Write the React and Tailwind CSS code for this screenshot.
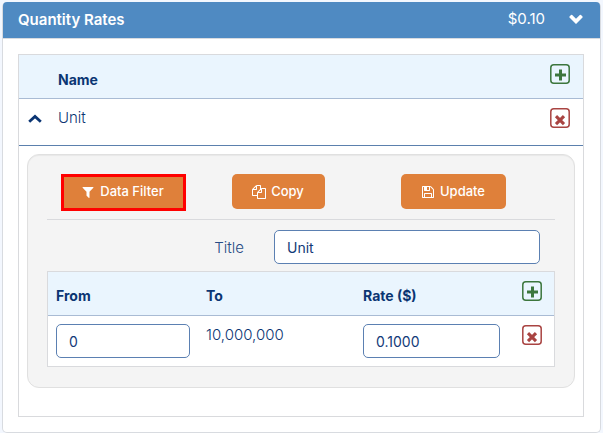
const FilterIcon = () => (
  <svg viewBox="0 0 1792 1792" className="size-3.5 fill-current" aria-hidden="true">
    <path d="M1595 295q17 41-14 70l-493 493v742q0 42-39 59-13 5-25 5-27 0-45-19l-256-256q-19-19-19-45v-486l-493-493q-31-29-14-70 17-39 59-39h1280q42 0 59 39z" />
  </svg>
);

const CopyIcon = () => (
  <svg viewBox="0 0 1792 1792" className="size-3.5 fill-current" aria-hidden="true">
    <path d="M1696 384q40 0 68 28t28 68v1216q0 40-28 68t-68 28h-960q-40 0-68-28t-28-68v-288h-544q-40 0-68-28t-28-68v-672q0-40 20-88t48-76l408-408q28-28 76-48t88-20h416q40 0 68 28t28 68v328q68-40 128-40h416zm-544 213l-299 299h299v-299zm-640-384l-299 299h299v-299zm196 647l316-316v-416h-384v416q0 40-28 68t-68 28h-416v640h512v-256q0-40 20-88t48-76zm956 804v-1152h-384v416q0 40-28 68t-68 28h-416v640h896z" />
  </svg>
);

const SaveIcon = () => (
  <svg viewBox="0 0 1792 1792" className="size-3.5 fill-current" aria-hidden="true">
    <path d="M512 1536h768v-384h-768v384zm896 0h128v-896q0-14-10-38.5t-20-34.5l-281-281q-10-10-34-20t-39-10v416q0 40-28 68t-68 28h-576q-40 0-68-28t-28-68v-416h-128v1280h128v-416q0-40 28-68t68-28h832q40 0 68 28t28 68v416zm-384-928v-320q0-13-9.5-22.5t-22.5-9.5h-192q-13 0-22.5 9.5t-9.5 22.5v320q0 13 9.5 22.5t22.5 9.5h192q13 0 22.5-9.5t9.5-22.5zm640 32v928q0 40-28 68t-68 28h-1344q-40 0-68-28t-28-68v-1344q0-40 28-68t68-28h928q40 0 88 20t76 48l280 280q28 28 48 76t20 88z" />
  </svg>
);

const ChevronDown = () => (
  <svg viewBox="0 0 14 10" className="block h-2.5 w-3.5 fill-current" aria-hidden="true">
    <path d="M7 9.9 0.5 3.6Q0 3 0.5 2.4L2 0.9Q2.6 0.4 3.2 0.9L7 4.7 10.8 0.9Q11.4 0.4 12 0.9L13.5 2.4Q14 3 13.5 3.6Z" />
  </svg>
);

const ChevronUp = () => (
  <svg viewBox="0 0 14 9" className="block h-[9px] w-3.5" fill="none" stroke="currentColor" strokeWidth="2.8" aria-hidden="true">
    <path d="M1.2 7.7 7 2.4 12.8 7.7" />
  </svg>
);

function AddButton({ label }) {
  return (
    <button type="button" aria-label={label} className="block text-[#3c763d]">
      <svg viewBox="0 0 20 20" className="block size-5" fill="none" stroke="currentColor" aria-hidden="true">
        <rect x="0.8" y="0.8" width="18.4" height="18.4" rx="3" strokeWidth="1.5" />
        <path d="M10.5 5.5v11M5 11h11" strokeWidth="3" />
      </svg>
    </button>
  );
}

function RemoveButton({ label }) {
  return (
    <button type="button" aria-label={label} className="block text-[#a94442]">
      <svg viewBox="0 0 20 20" className="block size-5" fill="none" stroke="currentColor" aria-hidden="true">
        <rect x="0.8" y="0.8" width="18.4" height="18.4" rx="3" strokeWidth="1.5" />
        <path d="M6 8.2l8 8M14 8.2l-8 8" strokeWidth="3.1" />
      </svg>
    </button>
  );
}

function ActionButton({ icon, children, highlighted }) {
  return (
    <button
      type="button"
      className={
        "flex items-center gap-[5px] bg-[#df803a] text-[13px] font-medium text-white " +
        (highlighted ? "h-[37px] border-[3px] border-[#ff0000] pr-[19px] pl-[17px] pb-0.5" : "h-[35px] rounded-[5px] pr-[21px] pl-5")
      }
    >
      {icon}
      {children}
    </button>
  );
}

const inputClass =
  "block h-[34px] w-full rounded-[5px] border border-[#5b80b2] bg-white px-3 text-sm font-normal text-[#123a78]";

export default function App() {
  return (
    <div className="min-h-screen bg-[#f3f7fe] px-0.5 pt-0.5 pb-px font-['Inter','Liberation_Sans',sans-serif] text-[#0b3573]">
      <section className="rounded-[5px] border border-t-0 border-[#d8dbe0] bg-white">
        <header className="flex h-[37px] items-center rounded-t-[4px] border-b border-[#d8dbe0] bg-[#4f8ac2] pr-[17px] pl-[15px] text-[15px] text-white">
          <h2 className="grow font-semibold">Quantity Rates</h2>
          <span className="mr-6 pb-0.5 text-[15px]">$0.10</span>
          <button type="button" aria-label="Collapse quantity rates" className="pb-0.5">
            <ChevronDown />
          </button>
        </header>

        <div className="p-[15px] pr-4">
          <table className="w-full table-fixed border-separate border-spacing-0 border border-[#d9dadd] text-left text-[15px]">
            <colgroup>
              <col className="w-[39px]" />
              <col />
              <col className="w-[33px]" />
            </colgroup>
            <thead>
              <tr className="h-11 bg-[#eaf5fe] text-sm">
                <th className="border-b border-[#a9bbd4]" />
                <th className="border-b border-[#a9bbd4] pt-1.5 font-bold">Name</th>
                <th className="border-b border-[#a9bbd4] pt-[9px] align-top">
                  <AddButton label="Add rate table" />
                </th>
              </tr>
            </thead>
            <tbody>
              <tr className="h-[47px] align-top">
                <td className="border-b border-[#5b80ad] pt-[15px] pl-[9px]">
                  <button type="button" aria-label="Collapse Unit" className="block">
                    <ChevronUp />
                  </button>
                </td>
                <td className="border-b border-[#5b80ad] pt-2 font-light">Unit</td>
                <td className="border-b border-[#5b80ad] pt-[9px]">
                  <RemoveButton label="Remove Unit" />
                </td>
              </tr>
              <tr>
                <td colSpan={3} className="px-2 pt-2 pb-7">
                  <div className="rounded-xl border border-[#e0e0e0] bg-[#f4f4f4] px-[19px] pt-[19px] pb-5 shadow-[inset_0_1px_1px_rgba(0,0,0,0.05)]">
                    <div className="grid grid-cols-[153fr_157fr_193fr] items-start justify-items-center border-b border-[#d9dadd] pr-[5px] pb-2">
                      <ActionButton icon={<FilterIcon />} highlighted>Data Filter</ActionButton>
                      <ActionButton icon={<CopyIcon />}>Copy</ActionButton>
                      <ActionButton icon={<SaveIcon />}>Update</ActionButton>
                    </div>

                    <div className="grid grid-cols-[227fr_281fr] items-center pt-2.5 pb-[7px]">
                      <label htmlFor="rate-title" className="pt-0.5 pr-[30px] text-right font-light text-[#274c85]">Title</label>
                      <div className="pr-[15px]">
                        <input id="rate-title" className={inputClass} defaultValue="Unit" />
                      </div>
                    </div>

                    <table className="w-full table-fixed border-separate border-spacing-0 border border-[#d9dadd] bg-white">
                      <colgroup>
                        <col className="w-[150px]" />
                        <col className="w-[157px]" />
                        <col className="w-[167px]" />
                        <col className="w-[32px]" />
                      </colgroup>
                      <thead>
                        <tr className="h-11 bg-[#eaf5fe] text-sm">
                          <th className="border-b border-[#a9bbd4] pt-1 pl-2 font-bold">From</th>
                          <th className="border-b border-[#a9bbd4] pt-1 pl-2 font-bold">To</th>
                          <th className="border-b border-[#a9bbd4] pt-1 pl-2 font-bold">Rate ($)</th>
                          <th className="border-b border-[#a9bbd4] pt-[9px] align-top">
                            <AddButton label="Add range" />
                          </th>
                        </tr>
                      </thead>
                      <tbody>
                        <tr className="h-[50px] align-top">
                          <td className="px-2 pt-2">
                            <input aria-label="From" className={inputClass} defaultValue="0" />
                          </td>
                          <td className="px-2 pt-2 font-light">10,000,000</td>
                          <td className="pt-2 pr-[22px] pl-2">
                            <input aria-label="Rate ($)" className={inputClass} defaultValue="0.1000" />
                          </td>
                          <td className="pt-[9px]">
                            <RemoveButton label="Remove range" />
                          </td>
                        </tr>
                      </tbody>
                    </table>
                  </div>
                </td>
              </tr>
            </tbody>
          </table>
        </div>
      </section>
    </div>
  );
}
